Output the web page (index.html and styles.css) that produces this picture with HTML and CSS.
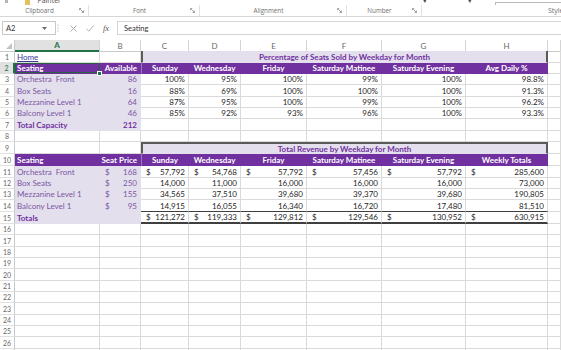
FILE: index.html
```html
<!DOCTYPE html>
<html>
<head>
<meta charset="utf-8">
<link rel="stylesheet" href="styles.css">
</head>
<body>
<div class="ribbon">
  <div class="rib-top">
    <span class="rt-mark"></span>
    <span class="rt-icon"></span>
    <span class="rt-fp">Format Painter</span>
    <span class="rt-fmt">Formatting ▾</span>
    <span class="rt-tbl">Table ▾</span>
    <span class="rt-gal"></span>
  </div>
  <div class="rib-groups">
    <div class="grp g-clip"><span class="glabel">Clipboard</span><svg class="launch" width="5" height="5" viewBox="0 0 5 5"><path d="M0.5 2.2V0.5H2.2M1.2 1.2L4.3 4.3M4.5 2.6V4.5H2.6" stroke="#8a8a8a" stroke-width="0.8" fill="none"/></svg></div>
    <div class="grp g-font"><span class="glabel">Font</span><svg class="launch" width="5" height="5" viewBox="0 0 5 5"><path d="M0.5 2.2V0.5H2.2M1.2 1.2L4.3 4.3M4.5 2.6V4.5H2.6" stroke="#8a8a8a" stroke-width="0.8" fill="none"/></svg></div>
    <div class="grp g-align"><span class="glabel">Alignment</span><svg class="launch" width="5" height="5" viewBox="0 0 5 5"><path d="M0.5 2.2V0.5H2.2M1.2 1.2L4.3 4.3M4.5 2.6V4.5H2.6" stroke="#8a8a8a" stroke-width="0.8" fill="none"/></svg></div>
    <div class="grp g-num"><span class="glabel">Number</span><svg class="launch" width="5" height="5" viewBox="0 0 5 5"><path d="M0.5 2.2V0.5H2.2M1.2 1.2L4.3 4.3M4.5 2.6V4.5H2.6" stroke="#8a8a8a" stroke-width="0.8" fill="none"/></svg></div>
    <div class="grp g-sty"><span class="glabel-sty">Styles</span></div>
  </div>
</div>

<div class="fbar">
  <div class="namebox"><span>A2</span><svg width="5" height="3" viewBox="0 0 5 3"><path d="M0 0H5L2.5 3Z" fill="#6a6a6a"/></svg></div>
  <div class="fb-icons">
    <svg class="dots" width="2" height="8" viewBox="0 0 2 8"><circle cx="1" cy="1" r="0.6" fill="#9a9a9a"/><circle cx="1" cy="4" r="0.6" fill="#9a9a9a"/><circle cx="1" cy="7" r="0.6" fill="#9a9a9a"/></svg>
    <svg class="ic-x" width="7" height="7" viewBox="0 0 7 7"><path d="M0.5 0.5L6.5 6.5M6.5 0.5L0.5 6.5" stroke="#a8a8a8" stroke-width="0.9"/></svg>
    <svg class="ic-ok" width="8" height="7" viewBox="0 0 8 7"><path d="M0.5 3.8L2.8 6.2L7.5 0.6" stroke="#a8a8a8" stroke-width="0.9" fill="none"/></svg>
    <span class="fx">fx</span>
  </div>
  <div class="finput">Seating</div>
</div>

<div class="sheet">
  <div class="row h11 colhdr">
    <div class="corner"><span class="tri"></span></div>
    <div class="ch ch-sel">A</div><div class="ch">B</div><div class="ch">C</div><div class="ch">D</div><div class="ch">E</div><div class="ch">F</div><div class="ch">G</div><div class="ch">H</div><div class="ch"></div>
  </div>

  <div class="row h12">
    <div class="rh">1</div>
    <div class="c link">Home</div><div class="c"></div>
    <div class="c title">Percentage of Seats Sold by Weekday for Month</div>
    <div class="c"></div>
  </div>

  <div class="row h11">
    <div class="rh rh-sel">2</div>
    <div class="c hdr sel">Seating<span class="handle"></span></div>
    <div class="c hdr r">Available</div>
    <div class="c hdr ctr first">Sunday</div>
    <div class="c hdr ctr">Wednesday</div>
    <div class="c hdr ctr">Friday</div>
    <div class="c hdr ctr">Saturday Matinee</div>
    <div class="c hdr ctr">Saturday Evening</div>
    <div class="c hdr ctr">Avg Daily %</div>
    <div class="c"></div>
  </div>

  <div class="row h11">
    <div class="rh">3</div>
    <div class="c fill lbl">Orchestra  Front</div><div class="c fill lbl r">86</div>
    <div class="c r">100%</div><div class="c r">95%</div><div class="c r">100%</div><div class="c r">99%</div><div class="c r">100%</div><div class="c r">98.8%</div>
    <div class="c"></div>
  </div>

  <div class="row h12">
    <div class="rh">4</div>
    <div class="c fill lbl">Box Seats</div><div class="c fill lbl r">16</div>
    <div class="c r">88%</div><div class="c r">69%</div><div class="c r">100%</div><div class="c r">100%</div><div class="c r">100%</div><div class="c r">91.3%</div>
    <div class="c"></div>
  </div>

  <div class="row h11">
    <div class="rh">5</div>
    <div class="c fill lbl">Mezzanine Level 1</div><div class="c fill lbl r">64</div>
    <div class="c r">87%</div><div class="c r">95%</div><div class="c r">100%</div><div class="c r">99%</div><div class="c r">100%</div><div class="c r">96.2%</div>
    <div class="c"></div>
  </div>

  <div class="row h11">
    <div class="rh">6</div>
    <div class="c fill lbl">Balcony Level 1</div><div class="c fill lbl r">46</div>
    <div class="c r">85%</div><div class="c r">92%</div><div class="c r">93%</div><div class="c r">96%</div><div class="c r">100%</div><div class="c r">93.3%</div>
    <div class="c"></div>
  </div>

  <div class="row h12">
    <div class="rh">7</div>
    <div class="c fill lbl b">Total Capacity</div><div class="c fill lbl b r">212</div>
    <div class="c"></div><div class="c"></div><div class="c"></div><div class="c"></div><div class="c"></div><div class="c"></div>
    <div class="c"></div>
  </div>

  <div class="row h11">
    <div class="rh">8</div>
    <div class="c"></div><div class="c"></div>
    <div class="c"></div><div class="c"></div><div class="c"></div><div class="c"></div><div class="c"></div><div class="c"></div>
    <div class="c"></div>
  </div>

  <div class="row h12">
    <div class="rh">9</div>
    <div class="c"></div><div class="c"></div>
    <div class="c title t-top">Total Revenue by Weekday for Month</div>
    <div class="c"></div>
  </div>

  <div class="row h12">
    <div class="rh">10</div>
    <div class="c hdr">Seating</div>
    <div class="c hdr r">Seat Price</div>
    <div class="c hdr ctr first">Sunday</div>
    <div class="c hdr ctr">Wednesday</div>
    <div class="c hdr ctr">Friday</div>
    <div class="c hdr ctr">Saturday Matinee</div>
    <div class="c hdr ctr">Saturday Evening</div>
    <div class="c hdr ctr">Weekly Totals</div>
    <div class="c"></div>
  </div>

  <div class="row h12">
    <div class="rh">11</div>
    <div class="c fill lbl">Orchestra  Front</div>
    <div class="c fill lbl acct"><span>$</span><span>168</span></div>
    <div class="c acct"><span>$</span><span>57,792</span></div>
    <div class="c acct"><span>$</span><span>54,768</span></div>
    <div class="c acct"><span>$</span><span>57,792</span></div>
    <div class="c acct"><span>$</span><span>57,456</span></div>
    <div class="c acct"><span>$</span><span>57,792</span></div>
    <div class="c acct"><span>$</span><span>285,600</span></div>
    <div class="c"></div>
  </div>

  <div class="row h11">
    <div class="rh">12</div>
    <div class="c fill lbl">Box Seats</div>
    <div class="c fill lbl acct"><span>$</span><span>250</span></div>
    <div class="c r">14,000</div><div class="c r">11,000</div><div class="c r">16,000</div><div class="c r">16,000</div><div class="c r">16,000</div><div class="c r">73,000</div>
    <div class="c"></div>
  </div>

  <div class="row h11">
    <div class="rh">13</div>
    <div class="c fill lbl">Mezzanine Level 1</div>
    <div class="c fill lbl acct"><span>$</span><span>155</span></div>
    <div class="c r">34,565</div><div class="c r">37,510</div><div class="c r">39,680</div><div class="c r">39,370</div><div class="c r">39,680</div><div class="c r">190,805</div>
    <div class="c"></div>
  </div>

  <div class="row h12">
    <div class="rh">14</div>
    <div class="c fill lbl">Balcony Level 1</div>
    <div class="c fill lbl acct"><span>$</span><span>95</span></div>
    <div class="c r bb">14,915</div><div class="c r bb">16,055</div><div class="c r bb">16,340</div><div class="c r bb">16,720</div><div class="c r bb">17,480</div><div class="c r bb">81,510</div>
    <div class="c"></div>
  </div>

  <div class="row h12">
    <div class="rh">15</div>
    <div class="c fill lbl b">Totals</div>
    <div class="c fill"></div>
    <div class="c acct tot"><span>$</span><span>121,272</span></div>
    <div class="c acct tot"><span>$</span><span>119,333</span></div>
    <div class="c acct tot"><span>$</span><span>129,812</span></div>
    <div class="c acct tot"><span>$</span><span>129,546</span></div>
    <div class="c acct tot"><span>$</span><span>130,952</span></div>
    <div class="c acct tot"><span>$</span><span>630,915</span></div>
    <div class="c"></div>
  </div>

  <div class="row h11"><div class="rh">16</div><div class="c"></div><div class="c"></div><div class="c"></div><div class="c"></div><div class="c"></div><div class="c"></div><div class="c"></div><div class="c"></div><div class="c"></div></div>
  <div class="row h12"><div class="rh">17</div><div class="c"></div><div class="c"></div><div class="c"></div><div class="c"></div><div class="c"></div><div class="c"></div><div class="c"></div><div class="c"></div><div class="c"></div></div>
  <div class="row h11"><div class="rh">18</div><div class="c"></div><div class="c"></div><div class="c"></div><div class="c"></div><div class="c"></div><div class="c"></div><div class="c"></div><div class="c"></div><div class="c"></div></div>
  <div class="row h11"><div class="rh">19</div><div class="c"></div><div class="c"></div><div class="c"></div><div class="c"></div><div class="c"></div><div class="c"></div><div class="c"></div><div class="c"></div><div class="c"></div></div>
  <div class="row h12"><div class="rh">20</div><div class="c"></div><div class="c"></div><div class="c"></div><div class="c"></div><div class="c"></div><div class="c"></div><div class="c"></div><div class="c"></div><div class="c"></div></div>
  <div class="row h11"><div class="rh">21</div><div class="c"></div><div class="c"></div><div class="c"></div><div class="c"></div><div class="c"></div><div class="c"></div><div class="c"></div><div class="c"></div><div class="c"></div></div>
  <div class="row h11"><div class="rh">22</div><div class="c"></div><div class="c"></div><div class="c"></div><div class="c"></div><div class="c"></div><div class="c"></div><div class="c"></div><div class="c"></div><div class="c"></div></div>
  <div class="row h12"><div class="rh">23</div><div class="c"></div><div class="c"></div><div class="c"></div><div class="c"></div><div class="c"></div><div class="c"></div><div class="c"></div><div class="c"></div><div class="c"></div></div>
  <div class="row h11"><div class="rh">24</div><div class="c"></div><div class="c"></div><div class="c"></div><div class="c"></div><div class="c"></div><div class="c"></div><div class="c"></div><div class="c"></div><div class="c"></div></div>
  <div class="row h11"><div class="rh">25</div><div class="c"></div><div class="c"></div><div class="c"></div><div class="c"></div><div class="c"></div><div class="c"></div><div class="c"></div><div class="c"></div><div class="c"></div></div>
  <div class="row h12"><div class="rh">26</div><div class="c"></div><div class="c"></div><div class="c"></div><div class="c"></div><div class="c"></div><div class="c"></div><div class="c"></div><div class="c"></div><div class="c"></div></div>
  <div class="row h11"><div class="rh">27</div><div class="c"></div><div class="c"></div><div class="c"></div><div class="c"></div><div class="c"></div><div class="c"></div><div class="c"></div><div class="c"></div><div class="c"></div></div>
</div>
</body>
</html>
```

FILE: styles.css
```css
* { box-sizing: border-box; margin: 0; padding: 0; }
html, body { width: 561px; height: 350px; overflow: hidden; background: #fff; }
body { font-family: Lato, "Liberation Sans", sans-serif; color: #1f1f1f; }

/* ribbon */
.ribbon { height: 17px; border-bottom: 1px solid #d6d6d6; overflow: hidden; background: #fff; }
.rib-top { height: 5px; display: flex; align-items: flex-end; overflow: hidden;
  font-family: "Open Sans", sans-serif; font-size: 7px; line-height: 8px; color: #4a4a4a; }
.rt-mark { width: 3px; height: 3px; background: #b5b5b5; margin-left: 5px; margin-bottom: 2px; }
.rt-icon { width: 6px; height: 6px; background: #e2c15c; margin-left: 17px; }
.rt-fp { margin-left: 7px; }
.rt-fmt { margin-left: 340px; }
.rt-tbl { margin-left: 5px; }
.rt-gal { width: 70px; height: 3px; border-top: 1px solid #b9b9b9; border-left: 1px solid #b9b9b9; margin-left: 5px; }
.rib-groups { height: 11px; display: flex; font-family: "Open Sans", sans-serif; font-size: 6.3px; color: #707070; }
.grp { display: flex; align-items: center; border-right: 1px solid #e2e2e2; height: 11px; padding-right: 4px; }
.g-clip { width: 89px; }
.g-font { width: 111px; }
.g-align { width: 147px; }
.g-num { width: 75px; }
.g-sty { flex: 1; border-right: none; padding-left: 126px; overflow: hidden; white-space: nowrap; font-size: 7px; }
.glabel { flex: 1; text-align: center; }
.launch { flex: none; }

/* formula bar */
.fbar { height: 23px; display: flex; align-items: flex-start; padding: 4px 0 0 2px; background: #fff; }
.namebox { width: 54px; height: 14px; border: 1px solid #c8c8c8; display: flex; align-items: center;
  justify-content: space-between; padding: 0 8px 0 3px; font-size: 7.5px; color: #333; }
.fb-icons { width: 61px; height: 14px; display: flex; align-items: center; }
.dots { margin-left: 1px; }
.ic-x { margin-left: 11px; }
.ic-ok { margin-left: 9px; }
.fx { margin-left: 9px; font-family: "Liberation Serif", serif; font-style: italic; font-size: 8.5px; color: #555; }
.finput { flex: 1; height: 14px; border: 1px solid #d4d4d4; border-right: none; padding-left: 6px;
  display: flex; align-items: center; font-size: 7.5px; color: #333; }

/* sheet */
.sheet { display: flex; flex-direction: column; }
.row { display: grid; grid-template-columns: 15px 85px 41px 48px 52px 66px 75px 84px 82px 13px; flex: none; }
.h11 { height: 11px; }
.h12 { height: 12px; }

.corner { border-right: 1px solid #c9c9c9; border-bottom: 1px solid #c9c9c9; position: relative; background: #fff; }
.tri { position: absolute; right: 2px; bottom: 2px; width: 0; height: 0;
  border-left: 6px solid transparent; border-bottom: 6px solid #c3c3c3; }
.ch { border-right: 1px solid #d4d4d4; border-bottom: 1px solid #c9c9c9; display: flex; align-items: center;
  justify-content: center; font-size: 8px; color: #6a6a6a; background: #fff; }
.ch-sel { background: #e1e1e1; color: #217346; border-bottom: 2px solid #217346; font-weight: 700; }

.rh { border-right: 1px solid #c9c9c9; border-bottom: 1px solid #e1e1e1; display: flex; align-items: center;
  justify-content: center; font-size: 7px; color: #6a6a6a; background: #fff; }
.rh-sel { background: #e1e1e1; color: #217346; border-right: 2px solid #217346; }

.c { border-right: 1px solid #dadada; border-bottom: 1px solid #dadada; display: flex; align-items: center;
  padding: 0 2px; font-size: 8px; line-height: 1; white-space: pre; min-width: 0; }
.r { justify-content: flex-end; padding-right: 3px; }
.ctr { justify-content: center; }
.acct { justify-content: space-between; padding-left: 5px; padding-right: 3px; }
.link { color: #3d3a9c; text-decoration: underline; }
.fill { background: #e4dfec; border-color: #e4dfec; }
.lbl { color: #7a58a6; }
.b { font-weight: 700; color: #7030a0; }
.hdr { background: #7030a0; border-color: #7030a0; color: #fff; font-weight: 700; }
.first { border-left: 1px solid #9b78bb; }
.title { grid-column: span 6; background: #e4dfec; border-bottom-color: #e4dfec; color: #7030a0; font-weight: 700;
  justify-content: center; border-left: 2px solid #5a5a5a; border-right: 2px solid #5a5a5a; }
.t-top { border-top: 2px solid #5a5a5a; }
.bb { border-bottom-color: #3f3f3f; }
.tot { border-bottom: 2px solid #3f3f3f; }

.sel { position: relative; box-shadow: inset 0 0 0 1px #2a5f40; }
.handle { position: absolute; right: -3px; bottom: -3px; width: 5px; height: 5px; background: #217346;
  border: 1px solid #fff; }
```
